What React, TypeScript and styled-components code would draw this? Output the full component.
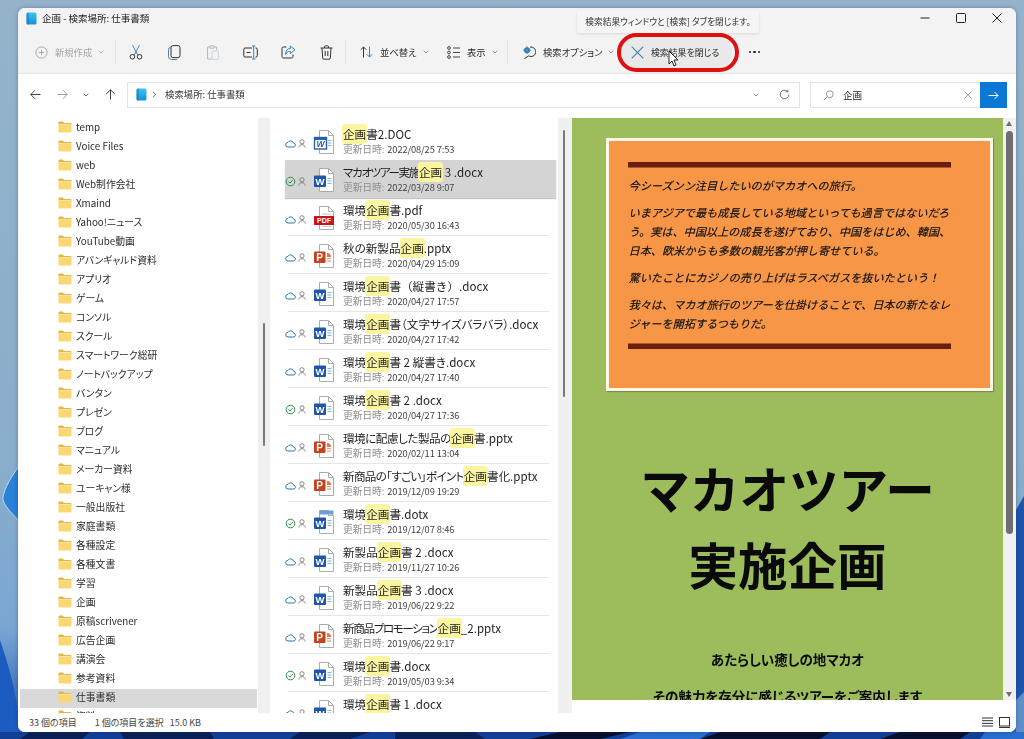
import React from "react";
import styled, { createGlobalStyle } from "styled-components";

const GlobalStyle = createGlobalStyle`
  html {
    background: #8fb0c9;
  }
  html, body {
    margin: 0;
    height: 739px;
    overflow: hidden;
  }
  body {
    font-family: "Noto Sans CJK JP", "Noto Sans", sans-serif;
    font-feature-settings: "palt";
    color: #1c1c1c;
  }
`;

const Wallpaper = styled.svg`
  position: fixed;
  left: 0;
  top: 0;
  z-index: -1;
`;

const Page = styled.div`
  padding: 8px 8px 7px 18px;
`;

const Window = styled.div`
  position: relative;
  width: 998px;
  height: 724px;
  display: flex;
  flex-direction: column;
  background: #fff;
  border-radius: 7px;
  overflow: hidden;
  box-shadow: 0 0 4px rgba(30, 50, 80, 0.4);
`;

const TitleBar = styled.div`
  height: 28px;
  flex: none;
  display: flex;
  align-items: center;
  padding: 0 8px 8px 8px;
  box-sizing: border-box;
  background: #f3f3f3;
  font-size: 9.5px;
  gap: 5px;
`;

const TitleText = styled.span`
  flex: 1;
  color: #222;
`;

const WindowButtons = styled.div`
  display: flex;
  gap: 26px;
  padding-right: 6px;
  align-items: center;
`;

const Toolbar = styled.div`
  height: 38px;
  flex: none;
  display: flex;
  align-items: center;
  padding-bottom: 5px;
  background: #f3f3f3;
  border-bottom: 1px solid #e6e6e6;
  box-sizing: border-box;
  font-size: 9.3px;
  white-space: nowrap;
`;

const Separator = styled.div`
  width: 1px;
  height: 24px;
  background: #e2e2e2;
  flex: none;
`;

const ToolText = styled.div<{ $width: number; $pad?: number; $disabled?: boolean }>`
  width: ${(p) => p.$width}px;
  flex: none;
  display: flex;
  align-items: center;
  box-sizing: border-box;
  padding-left: ${(p) => p.$pad ?? 14}px;
  gap: 7px;
  color: ${(p) => (p.$disabled ? "#a6a6a6" : "#2a2a2a")};
`;

const Chevron = styled.span`
  display: flex;
  margin-left: -1px;
`;

const ToolIcon = styled.div`
  width: 38px;
  flex: none;
  display: flex;
  justify-content: center;
  align-items: center;
`;

const IconGroup = styled.div`
  display: flex;
  padding: 0 0 0 1px;
`;

const CloseSearch = styled.div`
  width: 112px;
  height: 31px;
  margin-left: 5px;
  flex: none;
  display: flex;
  align-items: center;
  box-sizing: border-box;
  padding-left: 11px;
  gap: 7px;
  background: #e9e9e9;
  border-radius: 14px;
  color: #2a2a2a;
  font-size: 8.9px;
`;

const MoreDots = styled.div`
  margin-left: 17px;
  display: flex;
  gap: 2px;
`;

const Dot = styled.i`
  width: 2.4px;
  height: 2.4px;
  border-radius: 50%;
  background: #222;
`;

const AddressRow = styled.div`
  height: 43px;
  flex: none;
  display: flex;
  align-items: flex-start;
  padding-top: 8px;
  box-sizing: border-box;
  background: #fff;
`;

const NavArrows = styled.div`
  width: 109px;
  height: 26px;
  flex: none;
  display: flex;
  align-items: center;
  padding: 0 0 1px 12px;
  box-sizing: border-box;
  gap: 15.5px;
`;

const ArrowSvg = styled.svg<{ $rotate: number }>`
  transform: rotate(${(p) => p.$rotate}deg);
`;

const AddressBox = styled.div`
  width: 673px;
  height: 26px;
  flex: none;
  display: flex;
  align-items: center;
  box-sizing: border-box;
  border: 1px solid #e3e3e3;
  padding: 0 8px 1px;
  font-size: 9.4px;
  gap: 5px;
  color: #333;
`;

const AddressText = styled.span`
  flex: 1;
  margin: 0 0 1px 3px;
`;

const RefreshIcon = styled.svg`
  margin: 0 1px 0 15px;
`;

const SearchBox = styled.div`
  width: 197px;
  height: 26px;
  margin-left: 10px;
  flex: none;
  display: flex;
  align-items: center;
  box-sizing: border-box;
  border: 1px solid #e3e3e3;
  padding-left: 12px;
  font-size: 9.6px;
  color: #222;
`;

const SearchText = styled.span`
  flex: 1;
  margin: 0 0 1px 9px;
`;

const SearchGo = styled.div`
  width: 27px;
  height: 26px;
  margin: -1px -1px -1px 8px;
  display: flex;
  align-items: center;
  justify-content: center;
  background: #0b78d4;
`;

const Body = styled.div`
  height: 596px;
  flex: none;
  display: flex;
`;

const Nav = styled.div`
  width: 240px;
  flex: none;
  overflow: hidden;
  padding: 2px 1px 0 2px;
  box-sizing: border-box;
`;

const NavRow = styled.div<{ $selected?: boolean }>`
  height: 19.03px;
  display: flex;
  align-items: center;
  box-sizing: border-box;
  padding: 0 0 3px 38px;
  gap: 4px;
  font-size: 9.8px;
  color: #2b2b2b;
  background: ${(p) => (p.$selected ? "#d9d9d9" : "transparent")};
  white-space: nowrap;
`;

const ScrollTrack = styled.div<{ $width: number }>`
  width: ${(p) => p.$width}px;
  flex: none;
  background: #f0f0f0;
  margin-top: 1px;
  position: relative;
`;

const ScrollThumb = styled.div<{ $top: number; $height: number; $left: number }>`
  position: absolute;
  left: ${(p) => p.$left}px;
  top: ${(p) => p.$top}px;
  height: ${(p) => p.$height}px;
  width: 2px;
  background: #7a7a7a;
  border-radius: 1px;
`;

const List = styled.div`
  width: 288px;
  flex: none;
  overflow: hidden;
  padding: 5px 2px 0 15px;
  box-sizing: border-box;
`;

const FileRow = styled.div<{ $selected?: boolean; $plain?: boolean }>`
  position: relative;
  height: 38px;
  flex: none;
  display: flex;
  align-items: center;
  background: ${(p) => (p.$selected ? "#d4d4d4" : "transparent")};
  box-shadow: ${(p) => (p.$selected ? "0 1px 1px #c4c4c4" : "none")};
  &::after {
    content: "";
    display: ${(p) => (p.$plain ? "none" : "block")};
    position: absolute;
    left: 3px;
    right: 7px;
    bottom: 0;
    height: 1px;
    background: #e6e6e6;
  }
`;

const StatusCell = styled.div`
  width: 28px;
  height: 38px;
  flex: none;
  display: flex;
  align-items: center;
  gap: 2px;
  padding-top: 5px;
  box-sizing: border-box;
`;

const FileIconCell = styled.div`
  width: 30px;
  height: 38px;
  flex: none;
  display: flex;
  align-items: center;
  padding-top: 1px;
  box-sizing: border-box;
`;

const FileText = styled.div`
  display: flex;
  flex-direction: column;
  height: 38px;
  padding-top: 4px;
  box-sizing: border-box;
`;

const FileName = styled.div`
  font-size: 11.6px;
  line-height: 16px;
  color: #1e1e1e;
  white-space: nowrap;
`;

const NamePre = styled.span<{ $tight: number }>`
  letter-spacing: ${(p) => p.$tight}px;
`;

const NamePost = styled.span<{ $full?: boolean }>`
  font-feature-settings: ${(p) => (p.$full ? "normal" : "inherit")};
`;

const Mark = styled.span`
  background: #fbf5a2;
  border-radius: 3px;
  padding: 2px 1px;
  margin: 0 -1px;
`;

const FileMeta = styled.div`
  font-size: 9.3px;
  line-height: 13px;
  margin-top: 1px;
  color: #444;
  white-space: nowrap;
  letter-spacing: -0.12px;
`;

const MetaLabel = styled.span`
  color: #8f8f8f;
  margin-right: 3px;
  font-size: 9.8px;
`;

const PreviewArea = styled.div`
  width: 444px;
  flex: none;
  display: flex;
  align-items: flex-start;
`;

const Slide = styled.div`
  width: 431px;
  height: 582px;
  margin-top: 1px;
  flex: none;
  overflow: hidden;
  background: #9dbd5c;
  padding: 20px 10px 0 34px;
  box-sizing: border-box;
  text-align: center;
  color: #0a0a0a;
`;

const OrangeBox = styled.div`
  width: 387px;
  height: 253px;
  box-sizing: border-box;
  background: #f79646;
  border: 3px solid #fdf7e8;
  box-shadow: 1px 1px 1px #7d8a45;
  padding: 21px 38px 0 19px;
  text-align: left;
`;

const Rule = styled.div<{ $flip?: boolean }>`
  width: 323px;
  height: 5px;
  background: #6a1f0e;
  ${(p) =>
    p.$flip
      ? "border-top: 1.5px solid #b4562a;"
      : "border-bottom: 1.5px solid #b4562a;"}
`;

const Para = styled.p`
  margin: 8px 0 0 0.5px;
  font-size: 11.15px;
  line-height: 19px;
  font-style: italic;
  font-feature-settings: normal;
  white-space: nowrap;
  color: #161616;
  text-shadow: 0.3px 0 0 rgba(20, 20, 20, 0.6);
`;

const ParaGroup = styled.div`
  margin: 3px 0 10px;
`;

const BigTitle = styled.h1`
  margin: 58px 0 40px -34px;
  width: 431px;
  font-size: 49.6px;
  line-height: 76px;
  font-weight: 700;
  font-feature-settings: normal;
`;

const SubLine = styled.div`
  margin-left: -34px;
  width: 431px;
  font-size: 13.5px;
  line-height: 37px;
  font-weight: 700;
  white-space: nowrap;
`;

const ScrollColumn = styled.div`
  width: 13px;
  height: 582px;
  margin-top: 1px;
  flex: none;
  background: #f1f1f1;
  position: relative;
`;

const ThickThumb = styled.div`
  position: absolute;
  left: 3px;
  top: 13px;
  width: 7px;
  height: 403px;
  background: #6f6f6f;
  border-radius: 4px;
`;

const ArrowTop = styled.div`
  position: absolute;
  left: 3px;
  top: 3px;
  border: 3.5px solid transparent;
  border-top: 0;
  border-bottom: 5px solid #6f6f6f;
`;

const ArrowBottom = styled.div`
  position: absolute;
  left: 3px;
  bottom: 3px;
  border: 3.5px solid transparent;
  border-bottom: 0;
  border-top: 5px solid #6f6f6f;
`;

const StatusBar = styled.div`
  height: 19px;
  flex: none;
  display: flex;
  align-items: center;
  box-sizing: border-box;
  font-size: 9px;
  color: #444;
  padding: 0 6px 1px 11px;
  background: #fff;
`;

const StatusItem = styled.span<{ $gap: number }>`
  margin-right: ${(p) => p.$gap}px;
`;

const StatusRight = styled.div`
  margin-left: auto;
  display: flex;
  gap: 6px;
  align-items: center;
`;

const Tooltip = styled.div`
  position: absolute;
  left: 559px;
  top: 2px;
  width: 182px;
  height: 23px;
  display: flex;
  align-items: center;
  justify-content: center;
  background: #f5f5f5;
  border-radius: 3px;
  box-shadow: 0 1px 3px rgba(0, 0, 0, 0.1);
  font-size: 8.7px;
  color: #333;
  white-space: nowrap;
`;

const RedPill = styled.div`
  position: absolute;
  left: 599px;
  top: 25px;
  width: 122px;
  height: 39px;
  box-sizing: border-box;
  border: 4px solid #df1010;
  border-radius: 20px;
`;

const Pointer = styled.svg`
  position: absolute;
  left: 650px;
  top: 42px;
`;

const navItems = [
  "temp", "Voice Files", "web", "Web制作会社", "Xmaind", "Yahoo!ニュース", "YouTube動画",
  "アバンギャルド資料", "アプリオ", "ゲーム", "コンソル", "スクール", "スマートワーク総研",
  "ノートバックアップ", "バンタン", "プレゼン", "ブログ", "マニュアル", "メーカー資料",
  "ユーキャン様", "一般出版社", "家庭書類", "各種設定", "各種文書", "学習", "企画",
  "原稿scrivener", "広告企画", "講演会", "参考資料", "仕事書類", "資料",
];

type Kind = "doc" | "word" | "pdf" | "ppt" | "dot";
type FileItem = {
  pre: string;
  post: string;
  kind: Kind;
  ok?: boolean;
  date: string;
  selected?: boolean;
  tight?: number;
  full?: boolean;
};

const files: FileItem[] = [
  { pre: "", post: "書2.DOC", kind: "doc", date: "2022/08/25 7:53" },
  { pre: "マカオツアー実施", post: " 3 .docx", kind: "word", ok: true, date: "2022/03/28 9:07", selected: true, tight: -1.4 },
  { pre: "環境", post: "書.pdf", kind: "pdf", date: "2020/05/30 16:43" },
  { pre: "秋の新製品", post: ".pptx", kind: "ppt", date: "2020/04/29 15:09" },
  { pre: "環境", post: "書（縦書き）.docx", kind: "word", date: "2020/04/27 17:57", full: true },
  { pre: "環境", post: "書（文字サイズバラバラ）.docx", kind: "word", date: "2020/04/27 17:42" },
  { pre: "環境", post: "書 2 縦書き.docx", kind: "word", date: "2020/04/27 17:40" },
  { pre: "環境", post: "書 2 .docx", kind: "word", ok: true, date: "2020/04/27 17:36" },
  { pre: "環境に配慮した製品の", post: "書.pptx", kind: "ppt", date: "2020/02/11 13:04", tight: -0.5 },
  { pre: "新商品の「すごい」ポイント", post: "書化.pptx", kind: "ppt", date: "2019/12/09 19:29", tight: -0.7 },
  { pre: "環境", post: "書.dotx", kind: "dot", ok: true, date: "2019/12/07 8:46" },
  { pre: "新製品", post: "書 2 .docx", kind: "word", date: "2019/11/27 10:26" },
  { pre: "新製品", post: "書 3 .docx", kind: "word", date: "2019/06/22 9:22" },
  { pre: "新商品プロモーション", post: "_2.pptx", kind: "ppt", date: "2019/06/22 9:17", tight: -1.4 },
  { pre: "環境", post: "書.docx", kind: "word", ok: true, date: "2019/05/03 9:34" },
  { pre: "環境", post: "書 1 .docx", kind: "word", date: "2019/05/01 9:30" },
];

function FolderIcon() {
  return (
    <svg width="14" height="12" viewBox="0 0 14 12">
      <path d="M0.5 1.5a1 1 0 0 1 1-1h3.2l1.5 1.4h6.3a1 1 0 0 1 1 1V4H0.5z" fill="#e6b54a" />
      <path d="M0.5 3.6h13v7a1 1 0 0 1-1 1h-11a1 1 0 0 1-1-1z" fill="#fbd774" />
      <path d="M0.5 3.2h13v0.8h-13z" fill="#fdeab0" />
    </svg>
  );
}

function LibraryIcon() {
  return (
    <svg width="11" height="13" viewBox="0 0 11 13">
      <defs>
        <linearGradient id="lib" x1="0" y1="0" x2="0" y2="1">
          <stop offset="0" stopColor="#3cc4ee" />
          <stop offset="1" stopColor="#1b8fd8" />
        </linearGradient>
      </defs>
      <rect x="0.5" y="0.5" width="10" height="12" rx="1.6" fill="url(#lib)" />
      <path d="M0.5 2v9a1.5 1.5 0 0 0 1.5 1.5h1V0.5H2A1.5 1.5 0 0 0 0.5 2z" fill="#1578bd" opacity="0.55" />
    </svg>
  );
}

function Cloud() {
  return (
    <svg width="11" height="9" viewBox="0 0 11 9" fill="none" stroke="#2f77ad" strokeWidth="1">
      <path d="M3 8h5.2a2 2 0 0 0 .3-4A3 3 0 0 0 3 3.4 2.3 2.3 0 0 0 3 8z" />
    </svg>
  );
}

function Check() {
  return (
    <svg width="11" height="11" viewBox="0 0 11 11" fill="none" stroke="#2e8b4f" strokeWidth="1">
      <circle cx="5.5" cy="5.5" r="4.3" />
      <path d="M3.4 5.6l1.5 1.5 2.8-3" />
    </svg>
  );
}

function Person() {
  return (
    <svg width="8" height="9" viewBox="0 0 8 9" fill="none" stroke="#7c7c7c" strokeWidth="0.9">
      <circle cx="4" cy="2.8" r="2.1" />
      <path d="M0.8 8.6c0.3-2 1.4-2.9 3.2-2.9s2.9 0.9 3.2 2.9" />
    </svg>
  );
}

function FileIcon({ kind }: { kind: Kind }) {
  const page = (
    <path d="M6.5 0.5h9l5 5v18h-14z" fill="#fff" stroke="#a3a3a3" strokeWidth="0.9" />
  );
  const fold = <path d="M15.5 0.5v5h5" fill="none" stroke="#a3a3a3" strokeWidth="0.9" />;
  if (kind === "pdf") {
    return (
      <svg width="22" height="24" viewBox="0 0 22 24">
        {page}
        {fold}
        <path d="M9 8h9M9 20.5h9" stroke="#bbb" strokeWidth="0.8" />
        <rect x="1" y="10" width="20" height="9" fill="#c8151c" />
        <text x="11" y="17.2" textAnchor="middle" fontSize="7" fontWeight="700" fill="#fff" fontFamily="Liberation Sans, sans-serif">PDF</text>
      </svg>
    );
  }
  if (kind === "ppt") {
    return (
      <svg width="22" height="24" viewBox="0 0 22 24">
        {page}
        {fold}
        <path d="M14 9a4 4 0 0 1 4 4h-4z" fill="#e8754a" />
        <path d="M14 14h4v1.2h-4zM14 16.6h4v1.2h-4z" fill="#e9a18a" />
        <rect x="1" y="7.5" width="11.5" height="11.5" rx="1" fill="#c4421e" />
        <text x="6.7" y="17" textAnchor="middle" fontSize="10" fontWeight="700" fill="#fff" fontFamily="Liberation Sans, sans-serif">P</text>
      </svg>
    );
  }
  if (kind === "doc") {
    return (
      <svg width="22" height="24" viewBox="0 0 22 24">
        {page}
        {fold}
        <path d="M15 10.5h3.5M15 13h3.5M15 15.5h3.5" stroke="#7fb4de" strokeWidth="1" />
        <rect x="1.5" y="7.5" width="12" height="11.5" fill="#fff" stroke="#2b5fae" strokeWidth="1.4" />
        <rect x="2" y="8" width="11" height="2" fill="#2b5fae" />
        <text x="7.5" y="17.4" textAnchor="middle" fontSize="8.5" fontWeight="700" fontStyle="italic" fill="#2b5fae" fontFamily="Liberation Sans, sans-serif">W</text>
      </svg>
    );
  }
  return (
    <svg width="22" height="24" viewBox="0 0 22 24">
      {page}
      {fold}
      {kind === "dot" && <rect x="6.5" y="0.5" width="14" height="4" fill="#6d9fd6" />}
      <path d="M14.5 10.5h4M14.5 13h4M14.5 15.5h4" stroke="#7fb4de" strokeWidth="1" />
      <rect x="1" y="7.5" width="12" height="11.5" rx="1" fill="#1f56a8" />
      <text x="7" y="16.8" textAnchor="middle" fontSize="9.5" fontWeight="700" fill="#fff" fontFamily="Liberation Sans, sans-serif">W</text>
    </svg>
  );
}

function ChevronDown({ color = "#8a8a8a" }: { color?: string }) {
  return (
    <svg width="6" height="4" viewBox="0 0 6 4" fill="none" stroke={color} strokeWidth="0.9">
      <path d="M0.7 0.7L3 3l2.3-2.3" />
    </svg>
  );
}

const Glyphs = {
  plus: (
    <svg width="13" height="13" viewBox="0 0 13 13" fill="none" stroke="#a9a9a9" strokeWidth="1">
      <circle cx="6.5" cy="6.5" r="5.6" />
      <path d="M6.5 3.8v5.4M3.8 6.5h5.4" />
    </svg>
  ),
  scissors: (
    <svg width="14" height="16" viewBox="0 0 14 16" fill="none" strokeWidth="1">
      <path d="M3.5 1l5.2 10M10.5 1L5.3 11" stroke="#4a86b8" />
      <circle cx="3.4" cy="12.8" r="2.3" stroke="#333" />
      <circle cx="10.6" cy="12.8" r="2.3" stroke="#333" />
    </svg>
  ),
  copy: (
    <svg width="13" height="15" viewBox="0 0 13 15" fill="none" strokeWidth="1">
      <path d="M2.5 2.5h-0.2a1.8 1.8 0 0 0-1.8 1.8v7.2a3 3 0 0 0 3 3h5.7" stroke="#5f7f97" />
      <rect x="3" y="0.6" width="9" height="12" rx="2" stroke="#333" />
    </svg>
  ),
  paste: (
    <svg width="13" height="15" viewBox="0 0 13 15" fill="none" stroke="#b5b5b5" strokeWidth="1">
      <path d="M4 2H1.6v12h4" />
      <path d="M8 2h2.6v3" />
      <rect x="3.8" y="0.8" width="4.4" height="2.4" rx="0.6" />
      <rect x="6" y="6" width="6.4" height="8.4" rx="0.8" stroke="#c5d4df" />
    </svg>
  ),
  rename: (
    <svg width="15" height="15" viewBox="0 0 15 15" fill="none" strokeWidth="1">
      <path d="M9 3H2a1.2 1.2 0 0 0-1.2 1.2v6.6A1.2 1.2 0 0 0 2 12h7M12.5 3h0.6a1.2 1.2 0 0 1 1.2 1.2v6.6a1.2 1.2 0 0 1-1.2 1.2h-0.6" stroke="#333" />
      <path d="M9 1h3.4M9 14h3.4M10.7 1v13" stroke="#3d82b8" />
      <path d="M3.5 7.5h4" stroke="#333" />
    </svg>
  ),
  share: (
    <svg width="15" height="14" viewBox="0 0 15 14" fill="none" strokeWidth="1">
      <path d="M5.5 2H2.4a1.4 1.4 0 0 0-1.4 1.4v8.2A1.4 1.4 0 0 0 2.4 13h8.2a1.4 1.4 0 0 0 1.4-1.4V9.5" stroke="#333" />
      <path d="M9.3 1l4.7 3.8-4.7 3.8V6.3C6.8 6.3 5.3 7.3 4.6 9.4c0-3.8 1.8-5.8 4.7-6z" stroke="#3d82b8" />
    </svg>
  ),
  trash: (
    <svg width="13" height="15" viewBox="0 0 13 15" fill="none" stroke="#333" strokeWidth="1">
      <path d="M0.5 3h12M4.5 3V1.8A1 1 0 0 1 5.5 0.8h2a1 1 0 0 1 1 1V3" />
      <path d="M2 3l0.7 10a1.2 1.2 0 0 0 1.2 1.2h5.2a1.2 1.2 0 0 0 1.2-1.2L11 3" />
      <path d="M5.2 6v5M7.8 6v5" />
    </svg>
  ),
  sort: (
    <svg width="13" height="12" viewBox="0 0 13 12" fill="none" strokeWidth="1">
      <path d="M3.5 11.5V1M0.8 3.7L3.5 1l2.7 2.7" stroke="#333" />
      <path d="M9.5 0.5V11M6.8 8.3L9.5 11l2.7-2.7" stroke="#3d82b8" />
    </svg>
  ),
  view: (
    <svg width="13" height="13" viewBox="0 0 13 13" fill="none" strokeWidth="0.9" stroke="#333">
      <circle cx="2" cy="2" r="1.4" />
      <circle cx="2" cy="6.5" r="1.4" />
      <circle cx="2" cy="11" r="1.4" />
      <path d="M6 2h7M6 6.5h7M6 11h7" />
    </svg>
  ),
  options: (
    <svg width="14" height="13" viewBox="0 0 14 13" fill="none" strokeWidth="1">
      <path d="M8 1.1a4.8 4.8 0 1 1-1.5 8.8L2.3 12.8" stroke="#333" />
      <circle cx="5" cy="4.2" r="3" fill="#2c7fc0" />
      <circle cx="5" cy="4.2" r="1" fill="#f3f3f3" />
      <path d="M5 0.3v7.8M1.2 4.2h7.6" stroke="#2c7fc0" strokeWidth="1" />
    </svg>
  ),
  close: (
    <svg width="13" height="13" viewBox="0 0 13 13" stroke="#3d82b8" strokeWidth="1.1">
      <path d="M0.7 0.7l11.6 11.6M12.3 0.7L0.7 12.3" />
    </svg>
  ),
};

function Arrow({ dir, color }: { dir: "left" | "right" | "up"; color: string }) {
  const rotate = dir === "left" ? 0 : dir === "right" ? 180 : 90;
  return (
    <ArrowSvg $rotate={rotate} width="11" height="11" viewBox="0 0 11 11" fill="none" stroke={color} strokeWidth="1">
      <path d="M10.5 5.5H0.8M5 1.2L0.8 5.5 5 9.8" />
    </ArrowSvg>
  );
}

export default function App() {
  return (
    <>
      <GlobalStyle />
      <Wallpaper width="1024" height="739" viewBox="0 0 1024 739">
        <defs>
          <linearGradient id="sky" x1="0" y1="0" x2="0" y2="1">
            <stop offset="0" stopColor="#94b3cb" />
            <stop offset="0.62" stopColor="#89aeca" />
            <stop offset="0.85" stopColor="#7aa6d4" />
            <stop offset="1" stopColor="#1c56b0" />
          </linearGradient>
        </defs>
        <rect width="1024" height="739" fill="url(#sky)" />
        <path d="M20 465C8 480 2 495 3 500c4 10 10 14 17 22z" fill="#2a7fd6" stroke="#bcdcf2" strokeWidth="1" />
        <path d="M0 640c8 25 14 40 20 85v14H0z" fill="#1c5cc0" />
        <path d="M1016 510l8-14v200l-8 10z" fill="#1d55ad" />
        <path d="M1016 700l8-8v47h-8z" fill="#5f8fc8" />
        <rect y="732" width="1024" height="7" fill="#123f96" />
        <path d="M30 732h60l-8 7H20zM120 732h90l4 7h-90zM300 732h70l-20 7h-60zM395 732h80l10 7h-90z" fill="#0a1f55" />
        <path d="M560 732h70l-30 7h-70zM720 732h110l-10 7H700zM900 732h70l-10 7h-80z" fill="#060f2c" />
        <path d="M640 732h70l-10 7h-80zM985 732h39v7h-44z" fill="#2a6ed0" />
      </Wallpaper>
      <Page>
        <Window>
          <TitleBar>
            <LibraryIcon />
            <TitleText>企画 - 検索場所: 仕事書類</TitleText>
            <WindowButtons>
              <svg width="10" height="10" viewBox="0 0 10 10" stroke="#222" strokeWidth="1"><path d="M0.5 5h9" /></svg>
              <svg width="10" height="10" viewBox="0 0 10 10" fill="none" stroke="#222" strokeWidth="1"><rect x="0.5" y="0.5" width="9" height="9" rx="1" /></svg>
              <svg width="10" height="10" viewBox="0 0 10 10" stroke="#222" strokeWidth="1"><path d="M0.5 0.5l9 9M9.5 0.5l-9 9" /></svg>
            </WindowButtons>
          </TitleBar>
          <Toolbar>
            <ToolText $width={97} $pad={17} $disabled>
              {Glyphs.plus}
              <span>新規作成</span>
              <Chevron><ChevronDown color="#b0b0b0" /></Chevron>
            </ToolText>
            <Separator />
            <IconGroup>
              <ToolIcon>{Glyphs.scissors}</ToolIcon>
              <ToolIcon>{Glyphs.copy}</ToolIcon>
              <ToolIcon>{Glyphs.paste}</ToolIcon>
              <ToolIcon>{Glyphs.rename}</ToolIcon>
              <ToolIcon>{Glyphs.share}</ToolIcon>
              <ToolIcon>{Glyphs.trash}</ToolIcon>
            </IconGroup>
            <Separator />
            <ToolText $width={87}>
              {Glyphs.sort}
              <span>並べ替え</span>
              <Chevron><ChevronDown /></Chevron>
            </ToolText>
            <ToolText $width={74}>
              {Glyphs.view}
              <span>表示</span>
              <Chevron><ChevronDown /></Chevron>
            </ToolText>
            <Separator />
            <ToolText $width={107}>
              {Glyphs.options}
              <span>検索オプション</span>
              <Chevron><ChevronDown /></Chevron>
            </ToolText>
            <CloseSearch>
              {Glyphs.close}
              <span>検索結果を閉じる</span>
            </CloseSearch>
            <MoreDots><Dot /><Dot /><Dot /></MoreDots>
          </Toolbar>
          <AddressRow>
            <NavArrows>
              <Arrow dir="left" color="#444" />
              <Arrow dir="right" color="#a0a0a0" />
              <ChevronDown color="#555" />
              <Arrow dir="up" color="#444" />
            </NavArrows>
            <AddressBox>
              <LibraryIcon />
              <svg width="5" height="7" viewBox="0 0 5 7" fill="none" stroke="#555" strokeWidth="0.9"><path d="M1 0.8L3.8 3.5 1 6.2" /></svg>
              <AddressText>検索場所: 仕事書類</AddressText>
              <ChevronDown color="#777" />
              <RefreshIcon width="11" height="11" viewBox="0 0 11 11" fill="none" stroke="#666" strokeWidth="0.9">
                <path d="M9.8 5.5a4.3 4.3 0 1 1-1.3-3.1M8.8 0.6v2.2H6.6" />
              </RefreshIcon>
            </AddressBox>
            <SearchBox>
              <svg width="11" height="11" viewBox="0 0 11 11" fill="none" stroke="#888" strokeWidth="0.9">
                <circle cx="6.8" cy="4.2" r="3.4" />
                <path d="M4.4 6.6L0.8 10.2" />
              </svg>
              <SearchText>企画</SearchText>
              <svg width="8" height="8" viewBox="0 0 8 8" stroke="#999" strokeWidth="0.9"><path d="M0.5 0.5l7 7M7.5 0.5l-7 7" /></svg>
              <SearchGo>
                <svg width="11" height="9" viewBox="0 0 11 9" fill="none" stroke="#fff" strokeWidth="1"><path d="M0.5 4.5h9.5M6.5 1l3.5 3.5L6.5 8" /></svg>
              </SearchGo>
            </SearchBox>
          </AddressRow>
          <Body>
            <Nav>
              {navItems.map((name) => (
                <NavRow key={name} $selected={name === "仕事書類"}>
                  <FolderIcon />
                  <span>{name}</span>
                </NavRow>
              ))}
            </Nav>
            <ScrollTrack $width={12}>
              <ScrollThumb $left={5} $top={205} $height={123} />
            </ScrollTrack>
            <List>
              {files.map((f, i) => (
                <FileRow key={i} $selected={f.selected} $plain={f.selected || files[i + 1]?.selected}>
                  <StatusCell>
                    {f.ok ? <Check /> : <Cloud />}
                    <Person />
                  </StatusCell>
                  <FileIconCell><FileIcon kind={f.kind} /></FileIconCell>
                  <FileText>
                    <FileName>
                      <NamePre $tight={f.tight ?? 0}>{f.pre}</NamePre>
                      <Mark>企画</Mark>
                      <NamePost $full={f.full}>{f.post}</NamePost>
                    </FileName>
                    <FileMeta>
                      <MetaLabel>更新日時:</MetaLabel>
                      {f.date}
                    </FileMeta>
                  </FileText>
                </FileRow>
              ))}
            </List>
            <ScrollTrack $width={14}>
              <ScrollThumb $left={5} $top={12} $height={267} />
            </ScrollTrack>
            <PreviewArea>
              <Slide>
                <OrangeBox>
                  <Rule />
                  <ParaGroup>
                    <Para>今シーズンン注目したいのがマカオへの旅行。</Para>
                    <Para>
                      いまアジアで最も成長している地域といっても過言ではないだろ<br />
                      う。実は、中国以上の成長を遂げており、中国をはじめ、韓国、<br />
                      日本、欧米からも多数の観光客が押し寄せている。
                    </Para>
                    <Para>驚いたことにカジノの売り上げはラスベガスを抜いたという！</Para>
                    <Para>
                      我々は、マカオ旅行のツアーを仕掛けることで、日本の新たなレ<br />
                      ジャーを開拓するつもりだ。
                    </Para>
                  </ParaGroup>
                  <Rule $flip />
                </OrangeBox>
                <BigTitle>
                  マカオツアー<br />
                  実施企画
                </BigTitle>
                <SubLine>あたらしい癒しの地マカオ</SubLine>
                <SubLine>その魅力を存分に感じるツアーをご案内します</SubLine>
              </Slide>
              <ScrollColumn>
                <ArrowTop />
                <ThickThumb />
                <ArrowBottom />
              </ScrollColumn>
            </PreviewArea>
          </Body>
          <StatusBar>
            <StatusItem $gap={18}>33 個の項目</StatusItem>
            <StatusItem $gap={6}>1 個の項目を選択</StatusItem>
            <StatusItem $gap={0}>15.0 KB</StatusItem>
            <StatusRight>
              <svg width="11" height="10" viewBox="0 0 11 10" stroke="#333" strokeWidth="1"><path d="M0 1h11M0 3.7h11M0 6.4h11M0 9h11" /></svg>
              <svg width="11" height="11" viewBox="0 0 11 11" fill="none" stroke="#333" strokeWidth="1"><rect x="0.5" y="0.5" width="10" height="8.5" /><path d="M0 10.5h11" /></svg>
            </StatusRight>
          </StatusBar>
          <Tooltip>検索結果ウィンドウと [検索] タブを閉じます。</Tooltip>
          <RedPill />
          <Pointer width="11" height="17" viewBox="0 0 11 17">
            <path d="M1 1v13l3-3 2 5 2-1-2-5h4z" fill="#fff" stroke="#111" strokeWidth="0.9" />
          </Pointer>
        </Window>
      </Page>
    </>
  );
}
